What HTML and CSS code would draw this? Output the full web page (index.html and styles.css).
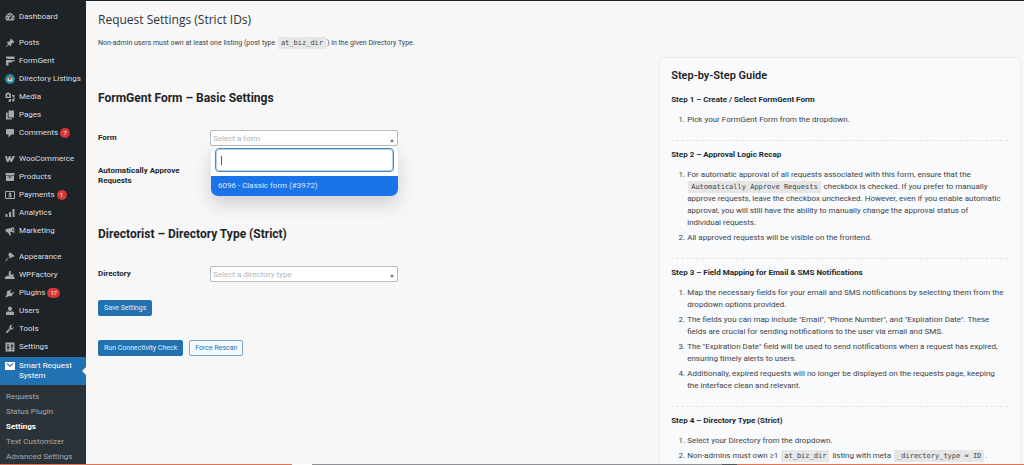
FILE: index.html
```
<!DOCTYPE html>
<html lang="en">
<head>
    <meta charset="UTF-8">
    <meta name="viewport" content="width=device-width, initial-scale=1.0">
    <title>Request Settings - Smart Request System</title>

    <link rel="stylesheet" href="styles.css">
</head>
<body>
    <div class="admin-wrap">
        <!-- Admin Menu -->
        <nav class="admin-menu">
            <ul class="menu-group">
                <li><a href="#"><svg class="icon" viewBox="0 0 20 20"><path fill-rule="evenodd" d="M3 17A9 9 0 1 1 17 17ZM9 4v3h2V4ZM4.500 6.500l2 2L8 7 6 5ZM14 5l-4.500 6a2 2 0 1 0 2.500 1.500L15.500 6ZM2.500 11v2h3v-2ZM15 11v2h3v-2Z"/></svg>Dashboard</a></li>
            </ul>
            <ul class="menu-group">
                <li><a href="#"><svg class="icon" viewBox="0 0 20 20"><path d="M10.500 3l1.500-2 7 7-2 1.500-1-.5-3.500 3.500c.5 2 0 3.500-1 4.500L8 13.500 2 18.500 1.500 18 6.500 12 3 8.500c1-1 2.500-1.500 4.500-1L11 4Z"/></svg>Posts</a></li>
                <li><a href="#"><svg class="icon" viewBox="0 0 20 20"><path d="M2 1h17v5H6a4 4 0 0 1-4-4ZM2 8h12v5H7v6H2ZM15 8h4v3h-4Z"/></svg>FormGent</a></li>
                <li><a href="#"><svg class="icon" viewBox="0 0 20 20"><circle cx="10" cy="10" r="10" fill="#1e8a9a"/><path fill="#c8d4d8" d="M5 9l5-5 5 5v6H5Z"/><path fill="#c94f45" d="M10 4.500a3 3 0 0 1 3 3c0 2-3 5-3 5s-3-3-3-5a3 3 0 0 1 3-3Z"/></svg>Directory Listings</a></li>
                <li><a href="#"><svg class="icon" viewBox="0 0 20 20"><path fill-rule="evenodd" d="M1 3h2l1-2h4l1 2h3v9H1ZM6.500 5a2.500 2.500 0 1 0 0 5 2.500 2.500 0 0 0 0-5ZM14 6h5v10.500a2.500 2.500 0 1 1-2-2.400V9h-3ZM9 14h3v3.500A2.500 2.500 0 1 1 9 15Z"/></svg>Media</a></li>
                <li><a href="#"><svg class="icon" viewBox="0 0 20 20"><path d="M7 1h11v14H7ZM2 5h3.500v11.500H14V19H2Z"/></svg>Pages</a></li>
                <li><a href="#"><svg class="icon" viewBox="0 0 20 20"><path d="M4 2h12a2 2 0 0 1 2 2v7a2 2 0 0 1-2 2h-3l-6 6v-6H4a2 2 0 0 1-2-2V4a2 2 0 0 1 2-2Z"/></svg>Comments <span class="count">7</span></a></li>
            </ul>
            <ul class="menu-group">
                <li><a href="#"><svg class="icon" viewBox="0 0 20 20"><path d="M0 4h4l1.500 6L8 4h3l1 6 3-6h5l-6 12h-3l-1.500-5L7 16H3.500Z"/></svg>WooCommerce</a></li>
                <li><a href="#"><svg class="icon" viewBox="0 0 20 20"><path fill-rule="evenodd" d="M1 2h18v4H1ZM2 7h16v11H2ZM7 9v2h6V9Z"/></svg>Products</a></li>
                <li><a href="#"><svg class="icon" viewBox="0 0 20 20"><path fill="none" stroke="currentColor" stroke-width="2" d="M1 3h18v14H1Z"/><path fill="none" stroke="currentColor" stroke-width="2" d="M13 7.500c-1-1-5.500-1.500-5.500.5 0 2.500 5.500 1.500 5.500 4 0 2-4.500 1.500-6 .5M10 5v10"/></svg>Payments <span class="count">1</span></a></li>
                <li><a href="#"><svg class="icon" viewBox="0 0 20 20"><path d="M1 12h4v6H1ZM8 8h4v10H8ZM15 2h4v16h-4Z"/></svg>Analytics</a></li>
                <li><a href="#"><svg class="icon" viewBox="0 0 20 20"><path fill-rule="evenodd" d="M16 2c2 1 4 7 2.500 12-3-2-5-2.500-8-2l1.500 6-3 1-3-6c-3 0-4.500-1.500-5-3.500S2 6 4 5.500L8 5c3-.5 6-1.500 8-3ZM15 5c-1 2-.5 5 1.500 6.500C17.500 9 16.500 6 15 5Z"/></svg>Marketing</a></li>
            </ul>
            <ul class="menu-group last">
                <li><a href="#"><svg class="icon" viewBox="0 0 20 20"><path d="M8 2l3-1 8 7-2 2-2-1-4 4-3-3-5.500 8.500-2-1.500L9 9 6.500 6Z"/></svg>Appearance</a></li>
                <li><a href="#"><svg class="icon" viewBox="0 0 20 20"><path d="M0 18v-4l3-1v-2l4 2 1-11h3l1 8 5-3v7h2v4Z"/></svg>WPFactory</a></li>
                <li><a href="#"><svg class="icon" viewBox="0 0 20 20"><path d="M12 3l1 1-3 4 3 3 4-3.500 1.500 1.500-4 3.500 1 1c-2 3-6 4-8.500 2.500L3 19l-2-2 3-4C2.500 10 4 6 7 4.500l1.500 1.500Z"/></svg>Plugins <span class="count">17</span></a></li>
                <li><a href="#"><svg class="icon" viewBox="0 0 20 20"><path d="M10 1a4 4 0 0 1 4 4c0 3-2 5-4 5S6 8 6 5a4 4 0 0 1 4-4ZM2 18v-4c0-2 3-3.500 5-3.500l3 2 3-2c2 0 5 1.500 5 3.500v4Z"/></svg>Users</a></li>
                <li><a href="#"><svg class="icon" viewBox="0 0 20 20"><path d="M17 7.500a5 5 0 0 1-6 3.500l-7 7.500-2.500-2.500L9 9a5 5 0 0 1 6-7l-3 3 .5 2.500 2.500.5 3-3c.3 1 .0 2-1 2.500Z"/></svg>Tools</a></li>
                <li><a href="#"><svg class="icon" viewBox="0 0 20 20"><path fill-rule="evenodd" d="M1 1h18v18H1ZM5 4v6H4v2h1v4h2v-4h2v-2H7V4ZM13 4v3h-2v2h2v7h2V9h2V7h-2V4Z"/></svg>Settings</a></li>
            </ul>

            <a class="menu-current" href="#"><svg class="icon" viewBox="0 0 20 20"><path fill-rule="evenodd" d="M0 2h20v16H0ZM3 5l7 7 7-7-1.500-1L10 9 4.500 4Z"/></svg><span>Smart Request System</span></a>

            <ul class="submenu">
                <li><a href="#">Requests</a></li>
                <li><a href="#">Status Plugin</a></li>
                <li><a class="active" href="#">Settings</a></li>
                <li><a href="#">Text Customizer</a></li>
                <li><a href="#">Advanced Settings</a></li>
            </ul>
        </nav>

        <!-- Page Content -->
        <main class="content">
            <h1>Request Settings (Strict IDs)</h1>
            <p class="description">Non-admin users must own at least one listing (post type <code>at_biz_dir</code>) in the given Directory Type.</p>

            <div class="columns">
                <form class="settings-form">
                    <h2>FormGent Form – Basic Settings</h2>
                    <div class="form-row">
                        <label for="form-select">Form</label>
                        <div class="select-box open">
                            <select id="form-select">
                                <option>Select a form</option>
                            </select>
                            <div class="dropdown">
                                <div class="search-box">
                                    <input type="text" aria-label="Search forms">
                                    <span class="caret"></span>
                                </div>
                                <ul class="results" role="listbox">
                                    <li role="option" aria-selected="true">6096 - Classic form (#3972)</li>
                                </ul>
                            </div>
                        </div>
                    </div>
                    <div class="form-row approve-row">
                        <span class="row-label">Automatically Approve Requests</span>
                    </div>

                    <h2>Directorist – Directory Type (Strict)</h2>
                    <div class="form-row">
                        <label for="directory-select">Directory</label>
                        <div class="select-box">
                            <select id="directory-select">
                                <option>Select a directory type</option>
                            </select>
                        </div>
                    </div>

                    <button class="button primary" type="submit">Save Settings</button>

                    <div class="tools">
                        <button class="button primary" type="button">Run Connectivity Check</button>
                        <button class="button" type="button">Force Rescan</button>
                    </div>
                </form>

                <!-- Guide -->
                <aside class="guide">
                    <h3>Step-by-Step Guide</h3>
                    <section>
                        <h4>Step 1 – Create / Select FormGent Form</h4>
                        <ol>
                            <li>Pick your FormGent Form from the dropdown.</li>
                        </ol>
                    </section>
                    <section>
                        <h4>Step 2 – Approval Logic Recap</h4>
                        <ol>
                            <li>For automatic approval of all requests associated with this form, ensure that the <code>Automatically Approve Requests</code> checkbox is checked. If you prefer to manually approve requests, leave the checkbox unchecked. However, even if you enable automatic approval, you will still have the ability to manually change the approval status of individual&nbsp;requests.</li>
                            <li>All approved requests will be visible on the frontend.</li>
                        </ol>
                    </section>
                    <section>
                        <h4>Step 3 – Field Mapping for Email &amp; SMS Notifications</h4>
                        <ol>
                            <li>Map the necessary fields for your email and SMS notifications by selecting them from the dropdown options provided.</li>
                            <li>The fields you can map include "Email", "Phone Number", and "Expiration Date". These fields are crucial for sending notifications to the user via email and SMS.</li>
                            <li>The "Expiration Date" field will be used to send notifications when a request has expired, ensuring timely alerts to users.</li>
                            <li>Additionally, expired requests will no longer be displayed on the requests page, keeping the interface clean and relevant.</li>
                        </ol>
                    </section>
                    <section>
                        <h4>Step 4 – Directory Type (Strict)</h4>
                        <ol>
                            <li>Select your Directory from the dropdown.</li>
                            <li>Non-admins must own ≥1 <code>at_biz_dir</code> listing with meta <code>_directory_type = ID</code>.</li>
                        </ol>
                    </section>
                </aside>
            </div>
        </main>
    </div>
    <div class="bottom-strip"></div>
</body>
</html>
```
FILE: styles.css
```
* {
    box-sizing: border-box;
}

body {
    margin: 0;
    height: 100vh;
    display: flex;
    flex-direction: column;
    overflow: hidden;
    border-top: 1px solid #1d2327;
    font-family: Roboto, "Noto Sans", sans-serif;
    font-size: 8px;
    line-height: 12px;
    background-color: #f7f7f7;
    color: #3c434a;
}

h1, h2, h3, h4, p, ul, ol {
    margin: 0;
    padding: 0;
}

ul {
    list-style: none;
}

.admin-wrap {
    flex: 1;
    min-height: 0;
    display: flex;
    overflow: hidden;
}

.bottom-strip {
    height: 1px;
    background: linear-gradient(to right, #dd7458 0 28.5%, #fff 28.5% 30.5%, #8f8f93 30.5% 70.5%, #55555a 70.5% 72%, #dd7458 72%);
}

/* Admin menu */
.admin-menu {
    width: 86px;
    flex-shrink: 0;
    padding-top: 7px;
    background-color: #1d2327;
}

.admin-menu a {
    display: flex;
    align-items: center;
    color: #dcdfe2;
    text-decoration: none;
}

.menu-group {
    margin-bottom: 8px;
}

.menu-group.last {
    margin-bottom: 1px;
}

.menu-group a {
    height: 18px;
    padding-left: 5px;
    white-space: nowrap;
}

.icon {
    width: 10px;
    height: 10px;
    margin-right: 4px;
    flex-shrink: 0;
    fill: currentColor;
    color: #a7aaad;
}

.count {
    min-width: 10px;
    height: 10px;
    margin-left: 2px;
    padding: 0 3px;
    border-radius: 5px;
    background-color: #d63638;
    color: #fff;
    font-size: 6px;
    line-height: 10px;
    text-align: center;
}

.admin-menu .menu-current {
    position: relative;
    align-items: flex-start;
    padding: 4px 8px 4px 5px;
    background-color: #2271b1;
    color: #fff;
    line-height: 10px;
}

.menu-current .icon {
    color: #fff;
}

.menu-current::after {
    content: "";
    position: absolute;
    right: 0;
    top: 10px;
    border: 4px solid transparent;
    border-right-color: #f7f7f7;
    border-left: 0;
}

.submenu {
    height: 100%;
    padding-top: 4px;
    background-color: #2c3338;
}

.submenu a {
    height: 15px;
    padding-left: 6px;
    color: #a4a9ae;
}

.submenu .active {
    color: #fff;
    font-weight: bold;
}

/* Content */
.content {
    flex: 1;
    min-width: 0;
    padding: 9px 3px 0 12px;
}

h1 {
    font-family: "Open Sans", "Noto Sans", sans-serif;
    font-size: 12px;
    line-height: 20px;
    font-weight: 400;
    color: #2c3338;
}

.description {
    margin-top: 7px;
    font-size: 7px;
}

code {
    margin: 0 1px;
    padding: 2px 3px;
    background-color: #e6e6e7;
    font-family: "DejaVu Sans Mono", monospace;
    font-size: 7px;
    line-height: 8px;
}

.columns {
    display: grid;
    grid-template-columns: minmax(0, 1fr) 39.2%;
    align-items: start;
    margin-top: 8px;
}

.settings-form {
    padding-top: 33px;
}

h2 {
    font-size: 12px;
    line-height: 16px;
    font-weight: 700;
    color: #1d2327;
}

.form-row {
    display: grid;
    grid-template-columns: 112px 188px;
    align-items: center;
    min-height: 16px;
    margin: 24px 0 18px;
}

.form-row label,
.row-label {
    padding-right: 24px;
    font-weight: 700;
    line-height: 10px;
    color: #23282d;
}

.approve-row {
    margin: 20px 0 40px;
}

.select-box {
    position: relative;
}

.select-box select {
    display: block;
    width: 100%;
    height: 16px;
    padding: 1px 2px 0;
    appearance: none;
    border: 1px solid #b9bbbe;
    border-radius: 2px;
    background-color: #fff;
    color: #b0b6c0;
    font-family: inherit;
    font-size: 8px;
}

.select-box::after {
    content: "";
    position: absolute;
    right: 4px;
    top: 9px;
    border: 2px solid transparent;
    border-top: 3px solid #777;
    border-bottom: 0;
}

.select-box.open::after {
    border-top: 0;
    border-bottom: 3px solid #777;
}

.dropdown {
    position: absolute;
    top: 16px;
    left: 1px;
    right: 0;
    z-index: 10;
    overflow: hidden;
    border-radius: 7px;
    background-color: #fff;
    box-shadow: 0 8px 18px rgba(0, 0, 0, 0.16);
}

.search-box {
    position: relative;
    padding: 2px 4px 4px;
}

.search-box input {
    display: block;
    width: 100%;
    height: 24px;
    padding: 0 6px;
    border: 1px solid #4a88b9;
    border-radius: 4px;
    box-shadow: inset 0 0 0 1px #b9d2e5;
    font-size: 8px;
}

.caret {
    position: absolute;
    left: 10px;
    top: 10px;
    width: 1px;
    height: 9px;
    background-color: #50575e;
}

.results li {
    padding: 4px 7px;
    background-color: #1a73e8;
    color: #dfeafb;
}

.button {
    height: 16px;
    padding: 0 5px;
    border: 1px solid #7aa8cf;
    border-radius: 2px;
    background-color: #f7f9fb;
    color: #2271b1;
    font-family: inherit;
    font-size: 7px;
    line-height: 14px;
}

.button.primary {
    border-color: #2271b1;
    background-color: #2271b1;
    color: #e4eef6;
}

.tools {
    display: flex;
    gap: 6px;
    margin-top: 24px;
}

/* Guide */
.guide {
    padding: 10px 12px 10px 11px;
    border: 1px solid #e9ebed;
    border-radius: 4px;
    background-color: #f8fafc;
}

.guide h3 {
    margin-bottom: 2px;
    font-size: 11px;
    line-height: 16px;
    font-weight: 600;
    color: #1d2327;
}

.guide section {
    padding: 8px 0 14px;
    border-bottom: 1px dashed #e2e5e8;
}

.guide h4 {
    font-size: 8px;
    line-height: 12px;
    color: #23282d;
}

.guide ol {
    margin-top: 8px;
    padding: 0 2px 0 16px;
}

.guide li + li {
    margin-top: 3px;
}
```
